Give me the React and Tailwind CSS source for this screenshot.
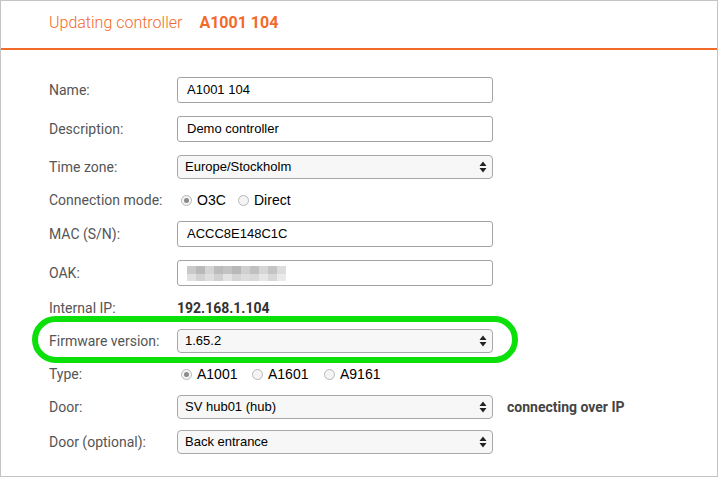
import React from 'react';

const labelFont = { fontFamily: 'Roboto, "Liberation Sans", sans-serif' };

function Arrows() {
  return (
    <svg width="8" height="12" viewBox="0 0 8 12" className="absolute right-[5px] top-1/2 -translate-y-1/2">
      <path d="M4 0.5 L7.5 5 L0.5 5 Z" fill="#222" />
      <path d="M4 11.5 L7.5 7 L0.5 7 Z" fill="#222" />
    </svg>
  );
}

function TextBox({ value, blurred }) {
  return (
    <div className="w-[316px] h-[26px] border border-[#a3a3a3] rounded-[3px] bg-white flex items-center pl-[9px] text-[13px] text-black font-['Liberation_Sans',Arial,sans-serif]">
      {blurred ? (
        <div className="flex flex-col gap-0">
          <div className="flex">
            {['#c9c9c9', '#b9b9b9', '#d4d4d4', '#bcbcbc', '#c3c3c3', '#b8b8b8', '#cfcfcf', '#c0c0c0', '#d6d6d6', '#c4c4c4', '#dcdcdc'].map((c, i) => (
              <span key={i} className="w-[9px] h-[8px] block" style={{ background: c }} />
            ))}
          </div>
          <div className="flex">
            {['#e0e0e0', '#d2d2d2', '#dedede', '#d0d0d0', '#e3e3e3', '#d5d5d5', '#dcdcdc', '#d9d9d9', '#e6e6e6', '#d8d8d8', '#eaeaea'].map((c, i) => (
              <span key={i} className="w-[9px] h-[7px] block" style={{ background: c }} />
            ))}
          </div>
        </div>
      ) : (
        value
      )}
    </div>
  );
}

function SelectBox({ value }) {
  return (
    <div className="relative w-[316px] h-[24px] border border-[#a8a8a8] rounded-[4px] bg-[#f7f7f7] flex items-center pl-[7px] text-[13px] text-black font-['Liberation_Sans',Arial,sans-serif]">
      {value}
      <Arrows />
    </div>
  );
}

function Radio({ checked, label, width }) {
  return (
    <div className="flex items-center shrink-0" style={{ width }}>
      <span className="w-[11px] h-[11px] shrink-0 rounded-full border border-[#b8b8b8] bg-[#f4f4f4] flex items-center justify-center">
        {checked && <span className="w-[5px] h-[5px] rounded-full bg-[#8a8a8a]" />}
      </span>
      <span className="ml-[5px] text-[14px] text-black font-['Liberation_Sans',Arial,sans-serif]">{label}</span>
    </div>
  );
}

function Row({ label, h, children }) {
  return (
    <div className="flex items-center" style={{ height: h }}>
      <div className="w-[128px] shrink-0 text-[14px] text-[#555]" style={labelFont}>{label}</div>
      {children}
    </div>
  );
}

export default function App() {
  return (
    <div className="relative w-[718px] h-[477px] border border-[#c4c4c4] bg-white">
      <div className="h-[47px] flex items-center pl-[48px] pb-[4px] text-[16px] text-[#f26a2a]" style={labelFont}>
        <span className="font-light">Updating controller</span>
        <span className="ml-[17px] font-bold">A1001 104</span>
      </div>
      <div className="h-[2px] bg-[#f26a2a]" />

      <div className="pl-[48px] pt-[21px]">
        <Row label="Name:" h={38}><TextBox value="A1001 104" /></Row>
        <Row label="Description:" h={40}><TextBox value="Demo controller" /></Row>
        <Row label="Time zone:" h={36}><SelectBox value="Europe/Stockholm" /></Row>
        <Row label="Connection mode:" h={30}>
          <div className="flex pl-[4px]">
            <Radio checked label="O3C" width={57} />
            <Radio label="Direct" />
          </div>
        </Row>
        <Row label="MAC (S/N):" h={38}><TextBox value="ACCC8E148C1C" /></Row>
        <Row label="OAK:" h={40}><TextBox blurred /></Row>
        <Row label="Internal IP:" h={30}>
          <span className="text-[14px] font-bold text-[#333]" style={labelFont}>192.168.1.104</span>
        </Row>
        <Row label="Firmware version:" h={36}><SelectBox value="1.65.2" /></Row>
        <Row label="Type:" h={30}>
          <div className="flex pl-[4px]">
            <Radio checked label="A1001" width={71} />
            <Radio label="A1601" width={72} />
            <Radio label="A9161" />
          </div>
        </Row>
        <Row label="Door:" h={36}>
          <SelectBox value="SV hub01 (hub)" />
          <span className="ml-[14px] text-[14px] font-bold text-[#444]" style={labelFont}>connecting over IP</span>
        </Row>
        <Row label="Door (optional):" h={34}><SelectBox value="Back entrance" /></Row>
      </div>

      <div className="absolute left-[31px] top-[315px] w-[486px] h-[47px] border-[6px] border-[#0be00b] rounded-[24px] pointer-events-none" />
    </div>
  );
}
